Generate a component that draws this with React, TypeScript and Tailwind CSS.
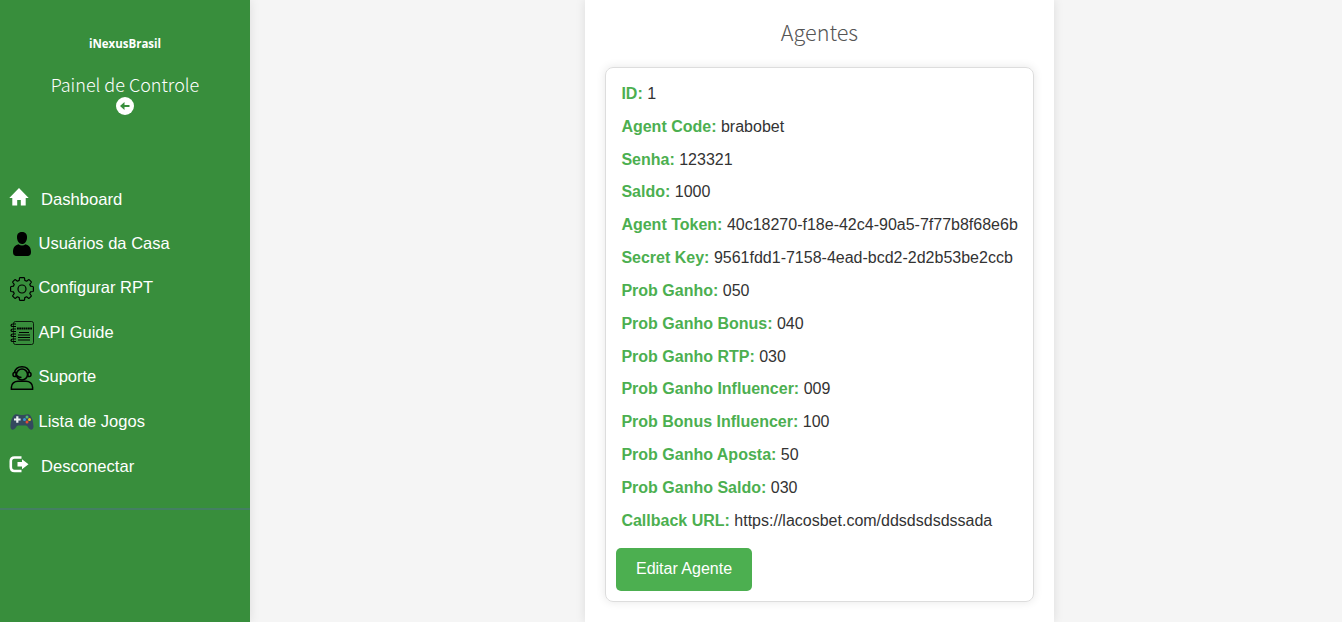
import type { ReactNode } from 'react';

interface Agent {
  label: string;
  value: string;
}

const fields: Agent[] = [
  { label: 'ID', value: '1' },
  { label: 'Agent Code', value: 'brabobet' },
  { label: 'Senha', value: '123321' },
  { label: 'Saldo', value: '1000' },
  { label: 'Agent Token', value: '40c18270-f18e-42c4-90a5-7f77b8f68e6b' },
  { label: 'Secret Key', value: '9561fdd1-7158-4ead-bcd2-2d2b53be2ccb' },
  { label: 'Prob Ganho', value: '050' },
  { label: 'Prob Ganho Bonus', value: '040' },
  { label: 'Prob Ganho RTP', value: '030' },
  { label: 'Prob Ganho Influencer', value: '009' },
  { label: 'Prob Bonus Influencer', value: '100' },
  { label: 'Prob Ganho Aposta', value: '50' },
  { label: 'Prob Ganho Saldo', value: '030' },
  { label: 'Callback URL', value: 'https://lacosbet.com/ddsdsdsdssada' },
];

function HomeIcon() {
  return (
    <svg className="h-[18px] w-5" viewBox="0 0 20 18" fill="white">
      <path d="M10 0 .3 10h3v7.500h4.900V12h3.600v5.500h4.900V10h3z" />
    </svg>
  );
}

function UserIcon() {
  return (
    <svg className="h-6 w-6" viewBox="0 0 24 24" fill="black">
      <path d="M7 5C7 1.400 9 0 12 0s5 1.400 5 5.200C17 9 15 12 12 12S7 9 7 5z" />
      <path d="M3 20c0-4.500 2-7 5.500-7.800 2 1.600 5 1.600 7 0C19 13 21 15.500 21 20c0 3-1.500 4-4 4H7c-2.500 0-4-1-4-4z" />
    </svg>
  );
}

function GearIcon() {
  return (
    <svg className="h-6 w-6" viewBox="0 0 24 24" fill="none" stroke="black" strokeWidth="1.2" strokeLinejoin="round">
      <path d="M10.200.6h3.600q.6 0 .7.600l.3 2.200 1.800.8 1.900-1.400q.5-.3.900.1l1.700 1.700q.4.400.1.900l-1.400 1.900.8 1.800 2.200.3q.6.100.6.700v3.600q0 .6-.6.700l-2.200.3-.8 1.800 1.400 1.900q.3.500-.1.900l-1.700 1.700q-.4.400-.9.100l-1.900-1.400-1.800.8-.3 2.200q-.1.600-.7.600h-3.600q-.6 0-.7-.6l-.3-2.200-1.800-.8-1.900 1.400q-.5.300-.9-.1l-1.700-1.700q-.4-.4-.1-.9l1.400-1.900-.8-1.800-2.200-.3q-.6-.1-.6-.7v-3.600q0-.6.600-.7l2.200-.3.8-1.800-1.400-1.900q-.3-.5.100-.9l1.700-1.700q.4-.4.900-.1l1.900 1.400 1.800-.8.300-2.200q.1-.6.700-.6z" />
      <circle cx="12" cy="12" r="4" />
    </svg>
  );
}

function ManualIcon() {
  return (
    <svg className="h-6 w-6" viewBox="0 0 24 24" fill="none" stroke="black" strokeWidth=".8">
      <path d="M3.500 3V2.500q0-2 2-2h16q2 0 2 2v19q0 2-2 2h-16q-2 0-2-2V21" />
      <path d="M3.500 3v18" strokeWidth=".6" />
      <path d="M1 4.500q0-1.500 2-1.500h3M1 4.500q0 1 2 1h3M1 9.500Q1 8 3 8h3M1 9.500q0 1 2 1h3M1 14.500q0-1.500 2-1.500h3M1 14.500q0 1 2 1h3M1 19.500q0-1.500 2-1.500h3M1 19.500q0 1 2 1h3" strokeWidth="1.200" />
      <path d="M7 7.500h15" strokeWidth="2.200" strokeDasharray="1.800 .4" />
      <path d="M9 11.500h10M8 14h12M8 16.500h12M8 19h12" strokeWidth="1" />
    </svg>
  );
}

function SupportIcon() {
  return (
    <svg className="h-6 w-6" viewBox="0 0 24 24" fill="none" stroke="black" strokeWidth="1.500">
      <circle cx="12" cy="8.500" r="5.500" />
      <path d="M4.300 7Q5.500.8 12 .8T19.700 7M6 6.500H4.500Q3 6.500 3 8.500t1.500 2H6zM18 6.500h1.500q1.500 0 1.500 2t-1.500 2H18zM7 9.500c1 1.500 3 2 4.500 2M1.400 23.200v-2c0-3.500 3-6 6.600-6h8c3.600 0 6.600 2.500 6.600 6v2z" />
    </svg>
  );
}

function GamepadIcon() {
  return (
    <svg className="h-6 w-6" viewBox="0 0 24 24">
      <path d="M5 4.500c2-1 4 .5 7 .5s5-1.500 7-.5c3 1.500 4.500 8 4.500 12 0 3-2 4-4 2.500-1.500-1.200-2-3.500-3.500-3.500H8C6.500 15.500 6 17.800 4.500 19c-2 1.500-4 .5-4-2.500 0-4 1.500-10.500 4.500-12z" fill="#34495e" />
      <path d="M6.200 6.200h2.200v2.200h2.200v2.200H8.400v2.200H6.200v-2.200H4V8.400h2.200z" fill="#ecf0f1" />
      <circle cx="17" cy="7" r="1.500" fill="#4fba6f" />
      <circle cx="19.500" cy="9.500" r="1.500" fill="#f0c419" />
      <circle cx="17" cy="12" r="1.500" fill="#e64c3c" />
      <circle cx="14.500" cy="9.500" r="1.500" fill="#3b97d3" />
    </svg>
  );
}

function LogoutIcon() {
  return (
    <svg className="h-[18px] w-5" viewBox="0 0 20 18">
      <path d="M12.500 2.500H5.500C3 2.500 1.800 4 1.800 6v6c0 2.500 1.200 4 3.700 4h7" fill="none" stroke="white" strokeWidth="2.600" />
      <path d="M8.500 7H13V4.200l6.500 5-6.500 5V11.500H8.500z" fill="white" />
    </svg>
  );
}

interface MenuItemProps {
  icon: ReactNode;
  label: string;
  glyph?: boolean;
}

function MenuItem({ icon, label, glyph }: MenuItemProps) {
  return (
    <li className="flex h-[44.5px] items-center">
      <span className={glyph ? 'mr-[12px] ml-[9px] -mt-1.5' : 'mr-[4.500px] ml-[10px] -mt-px'}>{icon}</span>
      <span className={glyph ? 'text-[16.600px] leading-6' : 'text-[16.500px] leading-6 -mt-1'}>{label}</span>
    </li>
  );
}

export default function App() {
  return (
    <div className="flex h-[622px] overflow-hidden bg-[#f5f5f5] font-['Liberation_Sans',sans-serif]">
      <aside className="w-[250px] shrink-0 bg-[#388e3c] text-white shadow-[0_0_10px_rgba(0,0,0,0.1)]">
        <header className="flex h-[178px] flex-col items-center pt-[35px]">
          <div className="font-['Open_Sans',sans-serif] text-[11.500px] leading-[17px] font-bold">iNexusBrasil</div>
          <h3 className="mt-[21px] font-['Noto_Sans_CJK_SC',sans-serif] text-[18px] leading-[22px] font-light">Painel de Controle</h3>
          <svg className="mt-0.5 h-[18px] w-[18px]" viewBox="0 0 18 18">
            <circle cx="9" cy="9" r="9" fill="white" />
            <path d="M4 9 8.500 5v3H13.500v2H8.500v3z" fill="#388e3c" />
          </svg>
        </header>
        <ul className="h-[312px]">
          <MenuItem icon={<HomeIcon />} label="Dashboard" glyph />
          <MenuItem icon={<UserIcon />} label="Usuários da Casa" />
          <MenuItem icon={<GearIcon />} label="Configurar RPT" />
          <MenuItem icon={<ManualIcon />} label="API Guide" />
          <MenuItem icon={<SupportIcon />} label="Suporte" />
          <MenuItem icon={<GamepadIcon />} label="Lista de Jogos" />
          <MenuItem icon={<LogoutIcon />} label="Desconectar" glyph />
        </ul>
        <div className="mt-[18px] h-0.5 w-full bg-[#437f62]" />
      </aside>
      <main className="ml-[335px] h-full w-[469px] shrink-0 bg-white px-5 pt-[15px] shadow-[0_0_10px_rgba(0,0,0,0.1)]">
        <h2 className="text-center font-['Noto_Sans_CJK_SC',sans-serif] text-[21.600px] leading-[33px] font-light text-[#555]">Agentes</h2>
        <div className="mt-[19px] h-[535px] w-[429px] rounded-lg border border-[#ddd] p-2.5 shadow-[0_0_10px_rgba(0,0,0,0.1)]">
          <div className="mt-[4.850px] flex flex-col gap-2.5 pl-[5.400px] text-[16px] leading-[22.850px] text-[#333]">
            {fields.map((field) => (
              <p key={field.label} className="whitespace-nowrap">
                <strong className="text-[#4caf50]">{field.label}:</strong> {field.value}
              </p>
            ))}
          </div>
          <button className="mt-[15.400px] h-[43px] w-[136px] rounded-[5px] bg-[#4caf50] pb-0.5 text-[16px] text-white">Editar Agente</button>
        </div>
      </main>
    </div>
  );
}
